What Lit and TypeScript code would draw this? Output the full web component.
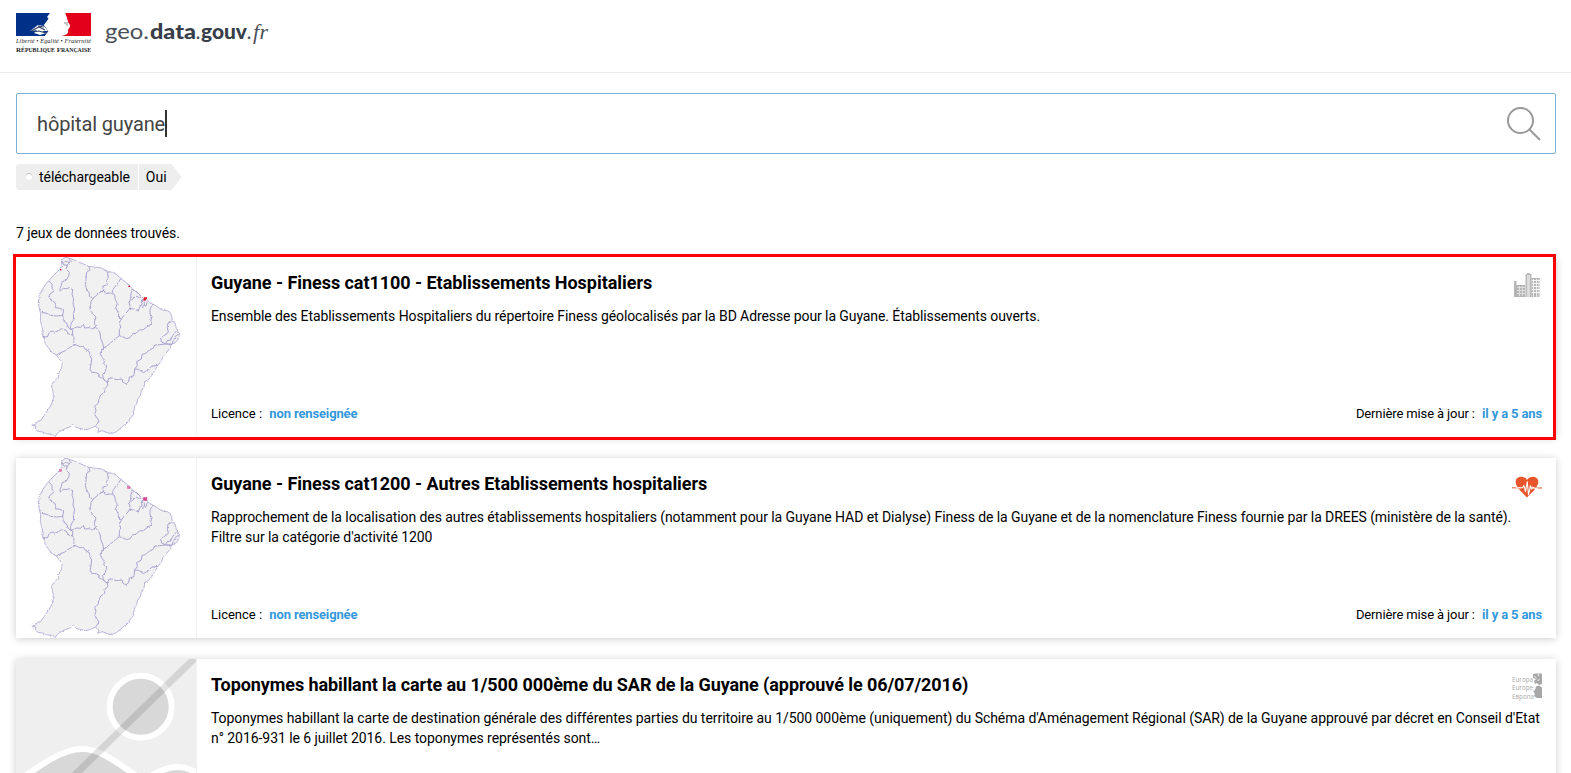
import { LitElement, html, css, svg, nothing } from "lit";
import { customElement, property } from "lit/decorators.js";
import { classMap } from "lit/directives/class-map.js";

interface Dataset {
  title: string;
  description: string;
  thumb: "finess" | "finess-other" | "none";
  icon: "city" | "health" | "europe";
  licence?: string;
  updated?: string;
  highlighted?: boolean;
}

const DATASETS: Dataset[] = [
  {
    title: "Guyane - Finess cat1100 - Etablissements Hospitaliers",
    description:
      "Ensemble des Etablissements Hospitaliers du répertoire Finess géolocalisés par la BD Adresse pour la Guyane. Établissements ouverts.",
    thumb: "finess",
    icon: "city",
    licence: "non renseignée",
    updated: "il y a 5 ans",
    highlighted: true,
  },
  {
    title: "Guyane - Finess cat1200 - Autres Etablissements hospitaliers",
    description:
      "Rapprochement de la localisation des autres établissements hospitaliers (notamment pour la Guyane HAD et Dialyse) Finess de la Guyane et de la nomenclature Finess fournie par la DREES (ministère de la santé). Filtre sur la catégorie d'activité 1200",
    thumb: "finess-other",
    icon: "health",
    licence: "non renseignée",
    updated: "il y a 5 ans",
  },
  {
    title: "Toponymes habillant la carte au 1/500 000ème du SAR de la Guyane (approuvé le 06/07/2016)",
    description:
      "Toponymes habillant la carte de destination générale des différentes parties du territoire au 1/500 000ème (uniquement) du Schéma d'Aménagement Régional (SAR) de la Guyane approuvé par décret en Conseil d'Etat n° 2016-931 le 6 juillet 2016. Les toponymes représentés sont…",
    thumb: "none",
    icon: "europe",
  },
];

const OUTLINE =
  "M155 36L160 28L168 25L178 28L190 32L206 39L220 45L236 52L250 54L262 55L274 57L283 62L296 68L308 70L320 76L328 85L342 96L357 108L366 119L380 130L392 141L402 149L412 155L428 165L440 172L450 179L460 184L472 185L480 190L485 200L487 216L495 222L499 238L508 254L506 268L499 278L485 286L480 298L470 310L459 322L455 334L444 349L436 362L425 380L415 392L404 398L402 414L394 427L391 440L383 450L380 464L374 474L370 488L371 496L361 508L352 522L340 530L330 539L319 548L304 554L290 550L276 545L263 550L266 542L256 531L240 539L226 542L208 538L198 535L190 525L180 534L168 538L156 544L148 548L140 555L136 563L128 556L112 555L98 549L84 547L76 540L78 532L64 529L76 526L83 517L93 514L102 500L110 488L118 477L126 462L130 446L129 430L124 408L134 394L145 386L146 371L155 357L157 340L148 330L139 318L128 312L116 298L106 284L102 268L98 262L99 246L95 230L91 214L92 194L88 180L85 160L88 138L98 120L106 107L116 95L130 80L142 68L150 60L156 50Z";

const BOUNDARIES =
  "M155 36L162 48L172 48L181 38L178 28M158 40L170 37L178 41M172 48L168 60L178 70L176 82L168 94L156 98L154 109L150 118L150 126L160 118L170 119L178 116L188 123L186 136L191 150L189 165L194 180L190 194L191 212L184 222L180 240" +
  "M116 95L126 106L126 118L132 126L122 134L116 142L125 156L134 159L138 168L136 176L150 178L161 184L158 198L160 216L170 222L174 234L180 240L188 243L188 258L192 266L191 280L195 286" +
  "M92 190L108 192L122 199L140 201L152 200L159 198" +
  "M98 262L112 264L118 250L126 246L134 250L146 245L154 239L168 243L176 255L188 258" +
  "M180 240L190 239L200 234L212 235L220 225L224 237L238 236L246 240L256 234" +
  "M139 318L150 312L164 306L178 296L195 286L206 292L220 292L226 301L238 308L240 320L245 330L243 346L240 362L244 370L258 371L267 375L266 383L278 388L292 400" +
  "M236 52L240 62L230 70L228 90L226 106L230 122L238 132L238 142L250 147L243 158L242 170L240 182L250 196L258 204L253 220L256 234L264 241L270 252L272 268L278 282L281 297L270 313L277 326L284 334L281 344L290 350L286 368L278 376L280 390L292 400" +
  "M283 62L292 70L295 84L289 98L292 107L278 112L282 124L270 130L262 137L250 147" +
  "M270 130L282 124L286 134L296 133L308 132L314 138L316 152L322 164L317 176L324 190L326 204L334 210L328 222L332 234L328 246L328 260L318 268L306 278L292 290L281 297" +
  "M332 89L324 102L314 114L308 124L308 132M334 210L344 196L354 186L360 176L358 160L362 148L363 132L368 122" +
  "M368 122L378 126L390 138L396 144L388 146L378 141L370 149L363 154M360 178L374 181L385 186L390 172L396 168L394 154L400 149M394 154L402 156L404 170L396 175L408 171L412 158" +
  "M428 165L420 180L420 194L426 203L422 216L425 224L410 234L400 242L388 243L378 253L368 254L360 266L350 269L340 264L328 260" +
  "M487 218L474 222L472 236L475 250L460 262L451 266L456 280L466 284L485 286M499 246L488 260L482 273L472 275L466 284M508 254L496 262L485 286" +
  "M485 286L466 285L450 287L434 288L430 297L416 305L406 314L396 316L394 330L380 338L382 350L374 360L386 361L400 371L416 362L424 352L444 349" +
  "M374 360L372 380L358 384L356 398L348 404L338 399L336 390L318 392L308 387L296 388L292 400L294 408L284 420L284 430L272 438L266 452L265 462L254 472L258 484L254 496L262 508L267 516L258 530";

@customElement("territory-map")
class TerritoryMap extends LitElement {
  @property() variant = "finess";
  static styles = css`
    :host { display: block; width: 180px; height: 180px; }
    svg { display: block; }
  `;
  render() {
    return html`<svg width="180" height="180" viewBox="18 24 540 540">
      <filter id="coast" x="0" y="0" width="1" height="1">
        <feTurbulence type="fractalNoise" baseFrequency="0.25" numOctaves="2" seed="4" />
        <feDisplacementMap in="SourceGraphic" scale="7" xChannelSelector="R" yChannelSelector="G" />
      </filter>
      <g filter="url(#coast)">
        <path d=${OUTLINE} fill="#f1f1f1" stroke="#b9b5da" stroke-width="3" stroke-linejoin="round" />
        <path d=${BOUNDARIES} fill="none" stroke="#a9a4d2" stroke-width="3" stroke-linejoin="round" />
      </g>
      ${this.variant === "finess"
        ? svg`<g fill="#e8182c"><rect x="150" y="60" width="4" height="4"/><rect x="355" y="110" width="5" height="4"/><path d="M402 145h9v6h-4v4h-7v-6h2z"/></g>`
        : svg`<g fill="#e66bb0" stroke="#c763a4" stroke-width="1"><rect x="148" y="58" width="7" height="7"/><rect x="352" y="109" width="8" height="7"/><rect x="400" y="142" width="11" height="10" fill="#d9468f"/></g>`}
    </svg>`;
  }
}

@customElement("theme-icon")
class ThemeIcon extends LitElement {
  @property() name = "city";
  static styles = css`
    :host { display: block; width: 30px; height: 30px; }
    svg { display: block; }
    .word { font: 7.2px "Open Sans", sans-serif; fill: #aaa; }
  `;
  private city() {
    return svg`<g fill="#b5b5b5">
      <path d="M2 10h2.5v16H2z"/><path d="M4 14h9v12H4z"/>
      <path d="M13.500 3h1.500v-1h3v1h1.500v23h-6z" fill="#b9b9b9"/><path d="M15 4h3v22h-3z" fill="#dcdcdc"/>
      <path d="M19.500 7h8.500v19h-8.500z"/></g>
      <path d="M5 16.500h8M5 19.500h8M5 22.500h8M7.500 15v10M10.500 15v10" stroke="#e6e6e6" stroke-width=".8"/>
      <path d="M20 9.500h8M20 12.500h8M20 15.500h8M20 18.500h8M20 21.500h8" stroke="#f4f4f4" stroke-width="1"/>
      <path d="M21.500 8v18M24.500 8v18M27 8v18" stroke="#f4f4f4" stroke-width=".9"/>`;
  }
  private health() {
    return svg`<path d="M15 8C13.500 4 5 3 3.800 8.500C2.800 14 8 18.500 15 25.500C22 18.500 27.200 14 26.200 8.500C25 3 16.500 4 15 8Z" fill="#e9562c"/>
      <path d="M0 15.700h9M21 16h9" stroke="#ee8f73" stroke-width="1.500" fill="none"/>
      <path d="M4 15.700h6.500l1.500-2 1.500 6 1.800-10 1.200 13 2-9 1 3.500 1.500-2 1 1H26" stroke="#fff" stroke-width="1.100" fill="none" stroke-linejoin="round"/>`;
  }
  private europe() {
    return svg`<text class="word" x="0" y="9" textLength="21" lengthAdjust="spacingAndGlyphs">Europa</text>
      <text class="word" x="0" y="17.300" textLength="21" lengthAdjust="spacingAndGlyphs">Europe</text>
      <text class="word" x="0" y="25.700" textLength="22" lengthAdjust="spacingAndGlyphs">Европа</text>
      <path d="M21 1l3-.5h6V11l-3 1-2-2-2 1-1-3 2-2-3-1zM24 13.500l3-1 3 2V25h-5l-3-2 1-2-2-3 2-1z" fill="#a8a8a8"/>
      <path d="M22.500 3l2 2.500M26 1l1 2.500M25.500 8l2-2" stroke="#fff" stroke-width=".8"/>`;
  }
  render() {
    const art = this.name === "city" ? this.city() : this.name === "health" ? this.health() : this.europe();
    return html`<svg width="30" height="30" viewBox="0 0 30 30">${art}</svg>`;
  }
}

@customElement("dataset-card")
class DatasetCard extends LitElement {
  @property({ attribute: false }) dataset!: Dataset;
  static styles = css`
    :host { display: block; }
    .card {
      position: relative;
      display: flex;
      height: 180px;
      background: #fff;
      box-shadow: 0 1px 8px rgba(0, 0, 0, 0.2);
    }
    .frame {
      position: absolute;
      inset: -3px 0 -3px -3px;
      border: 3px solid #f00;
    }
    .thumb { flex: 0 0 180px; border-right: 1px solid #f2f2f2; }
    .thumb svg { display: block; }
    .body {
      flex: 1;
      min-width: 0;
      display: flex;
      flex-direction: column;
      padding: 13px 14px 14px;
    }
    .head { display: flex; justify-content: space-between; height: 34px; }
    .head theme-icon { margin-top: 1px; }
    .title { margin: 0; font-size: 18px; line-height: 25px; font-weight: 700; letter-spacing: -0.042px; }
    .text { font-size: 14px; line-height: 20px; margin: 2px 0 0; letter-spacing: -0.074px; }
    .city .text { letter-spacing: -0.092px; }
    .europe .title { letter-spacing: -0.08px; }
    .europe .text { letter-spacing: -0.055px; }
    .meta {
      display: flex;
      justify-content: space-between;
      margin-top: auto;
      font-size: 13px;
      line-height: 19px;
    }
    .meta b { color: #3498db; margin-left: 4px; letter-spacing: -0.14px; }
    .date { letter-spacing: -0.12px; }
  `;
  private placeholder() {
    return html`<svg width="180" height="180" viewBox="0 0 180 180">
      <rect width="180" height="180" fill="#efefef" />
      <circle cx="124.700" cy="47.700" r="31" fill="#d8d8d8" stroke="#fff" stroke-width="6" />
      <path d="M-5 127C22 108 45 90 66 90C88 90 105 108 140 130V190H-5Z" fill="#d8d8d8" stroke="#fff" stroke-width="6" />
      <path d="M122 126C138 113 150 108 162 108C173 108 178 112 195 125V190H122Z" fill="#d8d8d8" stroke="#fff" stroke-width="6" />
      <path d="M-5 178L184 -6" stroke="#000" stroke-opacity=".11" stroke-width="7" />
    </svg>`;
  }
  render() {
    const d = this.dataset;
    return html`<article class=${classMap({ card: true, [d.icon]: true })}>
      <div class="thumb">
        ${d.thumb === "none" ? this.placeholder() : html`<territory-map variant=${d.thumb}></territory-map>`}
      </div>
      <div class="body">
        <div class="head">
          <h2 class="title">${d.title}</h2>
          <theme-icon name=${d.icon}></theme-icon>
        </div>
        <p class="text">${d.description}</p>
        ${d.licence
          ? html`<div class="meta">
              <span>Licence : <b>${d.licence}</b></span>
              <span class="date">Dernière mise à jour : <b>${d.updated}</b></span>
            </div>`
          : nothing}
      </div>
      ${d.highlighted ? html`<div class="frame"></div>` : nothing}
    </article>`;
  }
}

@customElement("app-root")
class AppRoot extends LitElement {
  static styles = css`
    :host {
      display: block;
      height: 773px;
      overflow: hidden;
      background: #fff;
      color: #000;
      font: 14px/20px Roboto, sans-serif;
    }
    .header {
      box-sizing: border-box;
      height: 73px;
      border-bottom: 1px solid #ebebeb;
      padding: 13px 16px 0;
    }
    .header svg { display: block; }
    .motto { font: italic 6.2px "Liberation Serif", serif; fill: #222; }
    .republic { font: 700 6.8px "Liberation Serif", serif; fill: #222; }
    .small { font-size: 5.6px; }
    .geo { font: 21px "Lato", sans-serif; fill: #4a5059; }
    .strong { font: 900 21px "Lato", sans-serif; fill: #373e49; }
    .fr { font: italic 22px "Liberation Serif", serif; fill: #4a5059; }
    .main { padding: 20px 15px 0 16px; }
    .search {
      box-sizing: border-box;
      height: 61px;
      border: 1px solid #7cb1d6;
      border-radius: 2px;
      padding: 0 14px 0 20px;
      display: flex;
      align-items: center;
      justify-content: space-between;
    }
    .query { display: flex; align-items: center; font-size: 20px; color: #444; letter-spacing: -0.13px; }
    .caret { width: 2px; height: 27px; background: #333; }
    .filter { display: flex; margin-top: 10px; height: 26px; line-height: 26px; }
    .key {
      display: flex;
      align-items: center;
      background: #eee;
      border-radius: 3px 0 0 3px;
      padding: 0 8px 0 10px;
      border-right: 1px solid #fff;
      letter-spacing: -0.06px;
    }
    .hole {
      width: 6px;
      height: 6px;
      border-radius: 50%;
      background: #fff;
      box-shadow: 0 -1px 1px rgba(0, 0, 0, 0.2);
      margin-right: 7px;
    }
    .value {
      background: #eee;
      padding: 0 15px 0 7px;
      clip-path: polygon(0 0, calc(100% - 10px) 0, 100% 50%, calc(100% - 10px) 100%, 0 100%);
    }
    .count { margin: 33px 0 14px; letter-spacing: -0.08px; }
    .list { display: grid; gap: 21px; }
  `;
  render() {
    return html`
      <header class="header">
        <svg width="260" height="42" viewBox="0 0 260 42">
          <path d="M0 0H34L31 4L33 6L28 12L32 18L29 23H0Z" fill="#003189" />
          <path d="M49 0H75V23H44Q54 22 52 17L54 12L52 9Z" fill="#e2001a" />
          <path d="M34 0H49L51 5L52 10L54 14L51 17Q54 21 44 23H29L33 17L28 12L33 5Z" fill="#fff" />
          <path d="M14 18L22 12L28 13L32 18L26 18L30 20L24 22L18 20L21 17Z" fill="#fff" />
          <path d="M15 18L23 14L29 17M17 19L23 18L30 20L32 18M22 13L28 14" fill="none" stroke="#34466d" stroke-width="1.200" />
          <path d="M48 10h4M50 12h2" stroke="#8b8b8b" stroke-width="1" />
          <text class="motto" x="0" y="30" textLength="75">Liberté • Égalité • Fraternité</text>
          <text class="republic" y="39" textLength="75" lengthAdjust="spacingAndGlyphs">R<tspan class="small">ÉPUBLIQUE</tspan> F<tspan class="small">RANÇAISE</tspan></text>
          <text class="geo" x="89" y="25.500" textLength="44" lengthAdjust="spacingAndGlyphs">geo.</text>
          <text class="strong" x="134" y="25.500" textLength="46" lengthAdjust="spacingAndGlyphs">data</text>
          <text class="geo" x="179.500" y="25.500">.</text>
          <text class="strong" x="185" y="25.500" textLength="46" lengthAdjust="spacingAndGlyphs">gouv</text>
          <text class="geo" x="230.500" y="25.500">.</text>
          <text class="fr" x="237" y="25.500" textLength="15">fr</text>
        </svg>
      </header>
      <main class="main">
        <div class="search">
          <div class="query"><span>hôpital guyane</span><i class="caret"></i></div>
          <svg width="34" height="34" viewBox="0 0 34 34" fill="none" stroke="#999" stroke-width="2">
            <circle cx="13.500" cy="13.500" r="12.500" /><path d="M22.500 22.500L33 33" />
          </svg>
        </div>
        <div class="filter">
          <span class="key"><i class="hole"></i>téléchargeable</span><span class="value">Oui</span>
        </div>
        <p class="count">7 jeux de données trouvés.</p>
        <section class="list">
          ${DATASETS.map((d) => html`<dataset-card .dataset=${d}></dataset-card>`)}
        </section>
      </main>
    `;
  }
}
